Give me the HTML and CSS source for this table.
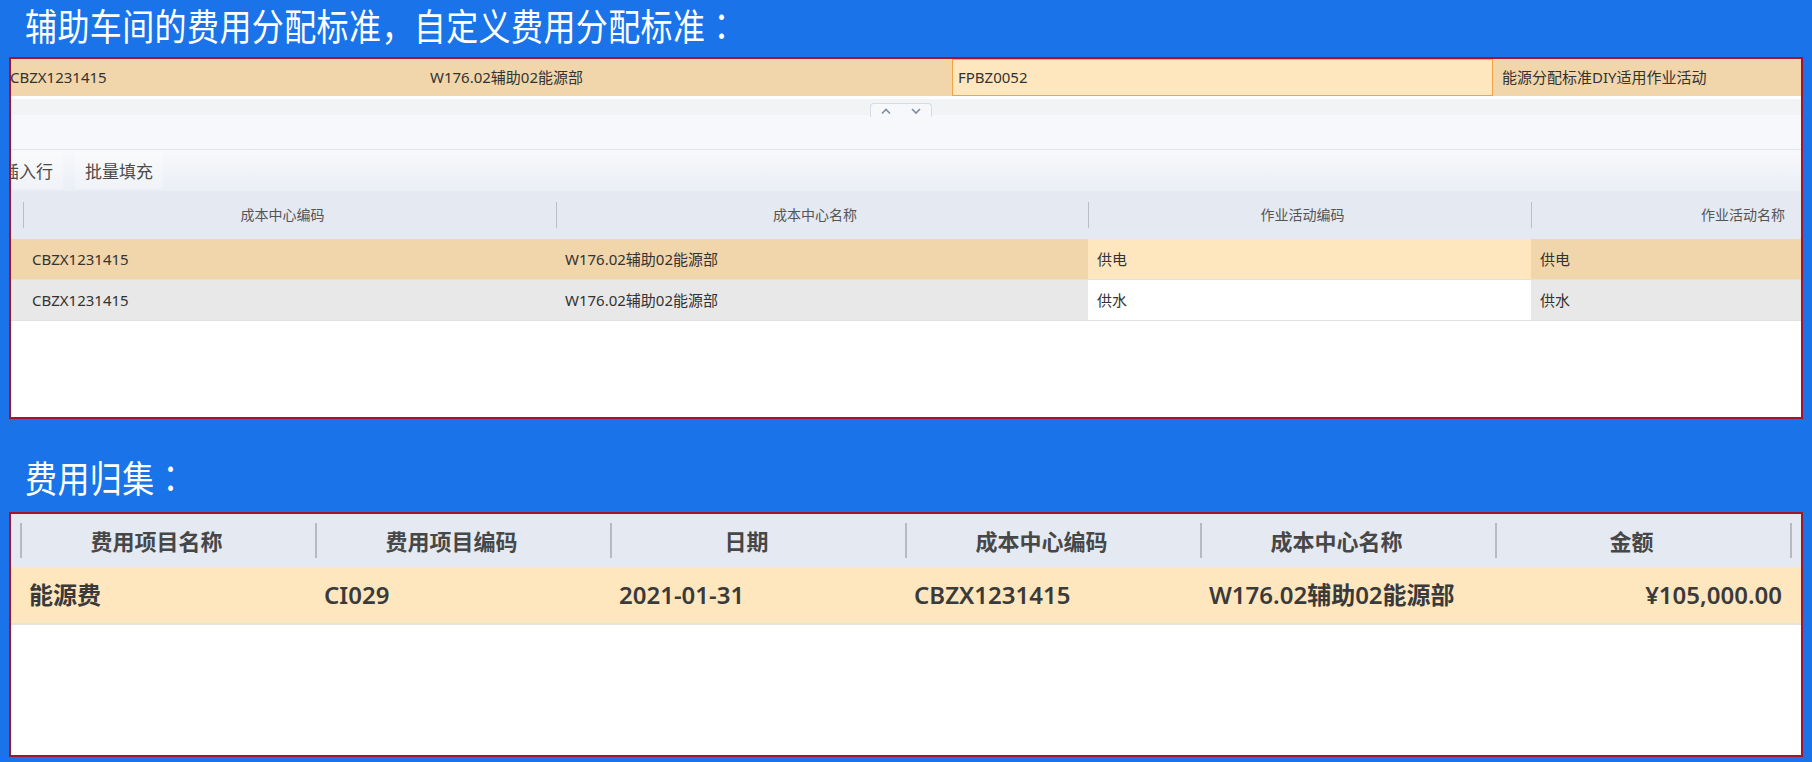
FILE: index.html
```html
<!DOCTYPE html>
<html lang="zh-CN">
<head>
<meta charset="utf-8">
<title>费用分配</title>
<link rel="stylesheet" href="styles.css">
</head>
<body>
<div class="page">
  <h1 class="title"><span>辅助车间的费用分配标准，自定义费用分配标准<span class="punct" lang="zh-TW">：</span></span></h1>

  <section class="panel panel-top">
    <div class="form-row">
      <div class="fcell fcell-first">CBZX1231415</div>
      <div class="fcell">W176.02辅助02能源部</div>
      <div class="fcell fcell-active">FPBZ0052</div>
      <div class="fcell fcell-last">能源分配标准DIY适用作业活动</div>
    </div>

    <div class="splitter">
      <div class="split-tab">
        <span class="split-btn"><svg width="12" height="8" viewBox="0 0 12 8"><polyline points="2,6.5 6,2.5 10,6.5" fill="none" stroke="#7f8ca0" stroke-width="1.6"/></svg></span>
        <span class="split-btn"><svg width="12" height="8" viewBox="0 0 12 8"><polyline points="2,2 6,6 10,2" fill="none" stroke="#7f8ca0" stroke-width="1.6"/></svg></span>
      </div>
    </div>

    <div class="toolbar">
      <button class="tool-btn tool-btn-cut">插入行</button>
      <button class="tool-btn">批量填充</button>
    </div>

    <div class="grid grid-top">
      <div class="gh gh-stub"></div>
      <div class="gh gh-sep">成本中心编码</div>
      <div class="gh gh-sep">成本中心名称</div>
      <div class="gh gh-sep">作业活动编码</div>
      <div class="gh gh-sep gh-right">作业活动名称</div>

      <div class="gc row-sel"></div>
      <div class="gc row-sel">CBZX1231415</div>
      <div class="gc row-sel">W176.02辅助02能源部</div>
      <div class="gc row-sel cell-focus">供电</div>
      <div class="gc row-sel">供电</div>

      <div class="gc row-alt"></div>
      <div class="gc row-alt">CBZX1231415</div>
      <div class="gc row-alt">W176.02辅助02能源部</div>
      <div class="gc row-alt cell-white">供水</div>
      <div class="gc row-alt">供水</div>
    </div>
  </section>

  <h2 class="title title-2"><span>费用归集<span class="punct" lang="zh-TW">：</span></span></h2>

  <section class="panel panel-bottom">
    <div class="grid grid-bottom">
      <div class="bh bh-stub"></div>
      <div class="bh bh-sep">费用项目名称</div>
      <div class="bh bh-sep">费用项目编码</div>
      <div class="bh bh-sep">日期</div>
      <div class="bh bh-sep">成本中心编码</div>
      <div class="bh bh-sep">成本中心名称</div>
      <div class="bh bh-sep">金额</div>
      <div class="bh bh-sep"></div>

      <div class="bc"></div>
      <div class="bc">能源费</div>
      <div class="bc">CI029</div>
      <div class="bc">2021-01-31</div>
      <div class="bc">CBZX1231415</div>
      <div class="bc">W176.02辅助02能源部</div>
      <div class="bc bc-right">¥105,000.00</div>
      <div class="bc"></div>
    </div>
  </section>
</div>
</body>
</html>
```

FILE: styles.css
```css
* {
  box-sizing: border-box;
}

html,
body {
  margin: 0;
  padding: 0;
}

body {
  width: 1812px;
  height: 762px;
  overflow: hidden;
  background: #1a73e9;
  font-family: "Noto Sans", "Noto Sans CJK SC", sans-serif;
  color: #333;
}

.title {
  margin: 0;
  height: 57px;
  padding: 0 0 7px 25px;
  font-family: "Noto Sans CJK SC", sans-serif;
  font-size: 32px;
  font-weight: 400;
  line-height: 50px;
  color: #fff;
  white-space: nowrap;
  letter-spacing: 0.4px;
}

.title > span {
  display: inline-block;
  transform: scaleY(1.16);
}

.title .punct {
  font-family: "Noto Sans CJK TC", "Noto Sans CJK JP", sans-serif;
}

.title-2 {
  height: 93px;
  padding: 33px 0 10px 25px;
}

.panel {
  margin: 0 9px;
  border: 2px solid #a3142d;
  background: #fff;
  overflow: hidden;
}

.panel-top {
  height: 362px;
}

.panel-bottom {
  height: 245px;
}

/* form row */
.form-row {
  display: grid;
  grid-template-columns: 419px 522px 541px 1fr;
  height: 37px;
  background: #f0d6aa;
  font-size: 15px;
  line-height: 37px;
  color: #333;
}

.fcell {
  white-space: nowrap;
  overflow: hidden;
}

.fcell-first {
  margin-left: -1px;
}

.fcell-active {
  background: #fee7bf;
  border: 1px solid #f3a246;
  padding-left: 5px;
  line-height: 35px;
}

.fcell-last {
  padding-left: 9px;
}

/* splitter */
.splitter {
  height: 54px;
  border-top: 3px solid #fff;
  border-bottom: 1px solid #e2e5ea;
  background: linear-gradient(#f2f3f4 0, #f2f3f4 16px, #f6f8fb 16px, #f6f8fb 100%);
  padding: 4px 0 0 859px;
}

.split-tab {
  display: flex;
  width: 62px;
  height: 14px;
  border: 1px solid #d6dce5;
  border-bottom: none;
  border-radius: 4px 4px 0 0;
  background: #f6f8fb;
}

.split-btn {
  flex: 1;
  display: flex;
  align-items: center;
  justify-content: center;
}

/* toolbar */
.toolbar {
  display: flex;
  gap: 12px;
  height: 41px;
  padding: 2px 0;
  background: linear-gradient(#f8f9fb, #eaeef5);
  overflow: hidden;
}

.tool-btn {
  height: 37px;
  padding: 0 10px;
  border: none;
  border-radius: 2px;
  background: rgba(255, 255, 255, 0.25);
  font-family: "Noto Sans CJK SC", sans-serif;
  font-size: 17px;
  color: #4a4a4a;
  white-space: nowrap;
}

.tool-btn-cut {
  margin-left: -19px;
}

/* top grid */
.grid-top {
  display: grid;
  grid-template-columns: 12px 533px 532px 443px 1fr;
  grid-template-rows: 48px 41px 41px;
}

.gh {
  background: #e4e9f2;
  font-size: 14px;
  color: #555;
  line-height: 48px;
  text-align: center;
  padding-right: 14px;
  white-space: nowrap;
}

.gh-sep {
  background: linear-gradient(#b8bdc6, #b8bdc6) left center / 1px 26px no-repeat, #e4e9f2;
}

.gh-right {
  text-align: right;
  padding-right: 16px;
}

.gc {
  font-size: 15px;
  line-height: 40px;
  padding-left: 9px;
  color: #333;
  white-space: nowrap;
  border-bottom: 1px solid #e1e1e1;
}

.grid-top .gc:nth-child(5n + 1) {
  padding-left: 0;
}

.row-sel {
  background: #f0d6aa;
}

.row-sel.cell-focus {
  background: #fee7bf;
}

.row-alt {
  background: #e8e8e8;
}

.row-alt.cell-white {
  background: #fff;
}

/* bottom grid */
.grid-bottom {
  display: grid;
  grid-template-columns: 9px repeat(6, 295px) 1fr;
  grid-template-rows: 53px 58px;
}

.bh {
  background: #e4e9f2;
  font-family: "Noto Sans CJK SC", sans-serif;
  font-size: 22px;
  font-weight: 700;
  color: #474747;
  line-height: 53px;
  text-align: center;
  padding-right: 22px;
  white-space: nowrap;
}

.bh-sep {
  background: linear-gradient(#b5bac3, #b5bac3) left center / 2px 35px no-repeat, #e4e9f2;
}

.bc {
  background: #fee7bf;
  border-bottom: 2px solid #e6e3de;
  font-size: 24px;
  font-weight: 600;
  color: #3a3a3a;
  line-height: 56px;
  padding: 0 9px;
  white-space: nowrap;
}

.bc-right {
  text-align: right;
  padding-right: 8px;
}
```
